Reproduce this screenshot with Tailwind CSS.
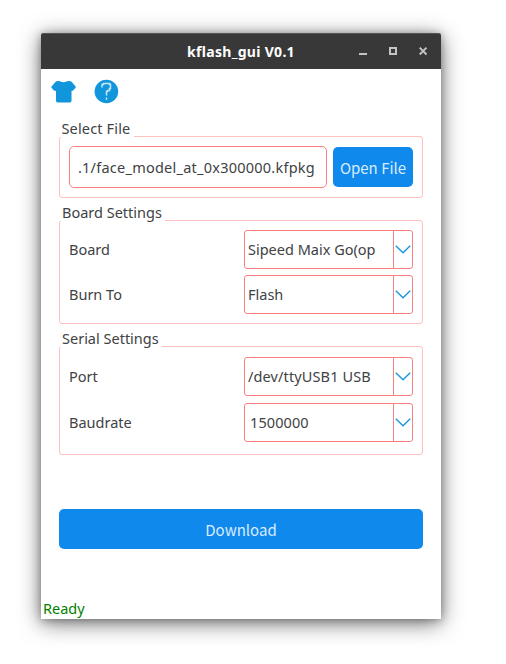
<!DOCTYPE html>
<html lang="en">
<head>
<meta charset="utf-8">
<title>kflash_gui V0.1</title>
<script src="https://cdn.jsdelivr.net/npm/@tailwindcss/browser@4"></script>
</head>
<body class="h-screen overflow-hidden bg-white pt-[33px] pl-[41px] font-['Noto_Sans',sans-serif] text-[14.5px] leading-[17px] whitespace-nowrap text-[#404244]">
<main class="flex h-[586px] w-[400px] flex-col rounded-t-[2px] bg-white shadow-[0_4px_22px_rgba(0,0,0,0.55),0_1px_8px_rgba(0,0,0,0.3)]">
  <header class="relative flex h-9 shrink-0 items-center justify-center rounded-t-[2px] border-t border-[#555] bg-[#383838] pb-px text-[14px] font-bold text-white">
    <h1 class="tracking-[0.3px]">kflash_gui V0.1</h1>
    <div class="absolute top-[12px] right-[13px] flex gap-[20px]">
      <svg class="size-[10px]" viewBox="0 0 10 10"><path d="M1 8h8" stroke="#c4c4c4" stroke-width="2"/></svg>
      <svg class="size-[10px]" viewBox="0 0 10 10"><path d="M2 2h6v6H2z" fill="none" stroke="#c4c4c4" stroke-width="2"/></svg>
      <svg class="size-[10px]" viewBox="0 0 10 10"><path d="M1.7 1.7l6.8 6.8M8.5 1.7L1.7 8.5" stroke="#c4c4c4" stroke-width="1.9"/></svg>
    </div>
  </header>
  <nav class="flex h-[51px] shrink-0 gap-[18px] pt-[10px] pl-[10px]">
    <svg class="size-[25px]" viewBox="0 0 25 25" fill="#1296db"><path d="M8 2Q12.5 4.3 17 2Q19.5 1.5 20.8 3L24.6 7.4Q25.2 8.2 24.4 9L22 11.5Q21.2 12.2 20.5 11.8V21.8Q20.5 23.5 18.8 23.5H6.7Q5 23.5 5 21.8V11.8Q3.8 12.2 3 11.5L.7 9Q-.1 8.2.6 7.4L4.4 3Q5.7 1.5 8 2Z"/></svg>
    <svg class="size-[25px]" viewBox="0 0 25 25"><circle cx="12.4" cy="12.5" r="11.8" fill="#1296db"/><path d="M8 8.5V5.5H9.5V4.5H15.5V5.5H16.5V9.5H15.5V11.5H13.5V12.5H12.5V16.5M12.5 18.5V20.8" fill="none" stroke="#c5e6f6" stroke-width="1.5"/></svg>
  </nav>
  <div class="flex flex-col gap-[6px] px-[18px]">
    <section>
      <h2 class="relative h-[17px] w-[75px] bg-white pl-[2.5px]"><span class="tracking-[0.15px]">Select File</span></h2>
      <div class="-mt-px flex h-[62px] items-center gap-[6px] rounded-[3px] border border-[#ffc0c0] px-[9px]">
        <div class="flex h-[42px] w-[258px] items-center rounded-[5px] border border-[#fa8080] px-[9px]">
          <div class="flex w-full justify-end overflow-hidden pr-[2px] leading-[24px]"><span class="tracking-[0.24px]">3.1/face_model_at_0x300000.kfpkg</span></div>
        </div>
        <button class="h-10 w-20 rounded-[5px] bg-[#1089ed] pt-px font-['Noto_Sans_CJK_SC',sans-serif] text-[15px] text-[#d9ecfd]">Open File</button>
      </div>
    </section>
    <section>
      <h2 class="relative h-[17px] w-[106px] bg-white pl-[3px]"><span>Board Settings</span></h2>
      <div class="-mt-px flex h-[104px] flex-col gap-[6px] rounded-[3px] border border-[#ffc0c0] px-[9px] pt-[9px]">
        <div class="flex items-center justify-between"><span>Board</span>
          <div class="flex h-[39px] w-[169px] items-center rounded-[3px] border border-[#fa8080]"><span class="w-[148px] pl-[3px]">Sipeed Maix Go(op</span>
            <div class="flex h-full w-[19px] items-center justify-center border-l border-[#fa8080]"><svg class="h-[9px] w-[16px]" viewBox="0 0 16 9"><path d="M.8 .8L8 7.8L15.2 .8" fill="none" stroke="#1296db" stroke-width="1.3"/></svg></div></div>
        </div>
        <div class="flex items-center justify-between"><span>Burn To</span>
          <div class="flex h-[39px] w-[169px] items-center rounded-[3px] border border-[#fa8080]"><span class="w-[148px] pl-[3px]">Flash</span>
            <div class="flex h-full w-[19px] items-center justify-center border-l border-[#fa8080]"><svg class="h-[9px] w-[16px]" viewBox="0 0 16 9"><path d="M.8 .8L8 7.8L15.2 .8" fill="none" stroke="#1296db" stroke-width="1.3"/></svg></div></div>
        </div>
      </div>
    </section>
    <section>
      <h2 class="relative h-[17px] w-[103px] bg-white pl-[3px]"><span>Serial Settings</span></h2>
      <div class="-mt-px flex h-[109px] flex-col gap-[7px] rounded-[3px] border border-[#ffc0c0] px-[9px] pt-[10px]">
        <div class="flex items-center justify-between"><span>Port</span>
          <div class="flex h-[39px] w-[169px] items-center rounded-[3px] border border-[#fa8080]"><span class="w-[148px] pl-[3px] tracking-[0.12px]">/dev/ttyUSB1 USB</span>
            <div class="flex h-full w-[19px] items-center justify-center border-l border-[#fa8080]"><svg class="h-[9px] w-[16px]" viewBox="0 0 16 9"><path d="M.8 .8L8 7.8L15.2 .8" fill="none" stroke="#1296db" stroke-width="1.3"/></svg></div></div>
        </div>
        <div class="flex items-center justify-between"><span>Baudrate</span>
          <div class="flex h-[39px] w-[169px] items-center rounded-[3px] border border-[#fa8080]"><span class="w-[148px] pl-[5px] tracking-[0.1px]">1500000</span>
            <div class="flex h-full w-[19px] items-center justify-center border-l border-[#fa8080]"><svg class="h-[9px] w-[16px]" viewBox="0 0 16 9"><path d="M.8 .8L8 7.8L15.2 .8" fill="none" stroke="#1296db" stroke-width="1.3"/></svg></div></div>
        </div>
      </div>
    </section>
  </div>
  <button class="mx-[18px] mt-[54px] h-10 shrink-0 rounded-[5px] bg-[#1089ed] pt-px font-['Noto_Sans_CJK_SC',sans-serif] text-[15px] text-[#d9ecfd]">Download</button>
  <footer class="mt-auto pb-[2px] pl-[2px] text-[#008000]">Ready</footer>
</main>
</body>
</html>
